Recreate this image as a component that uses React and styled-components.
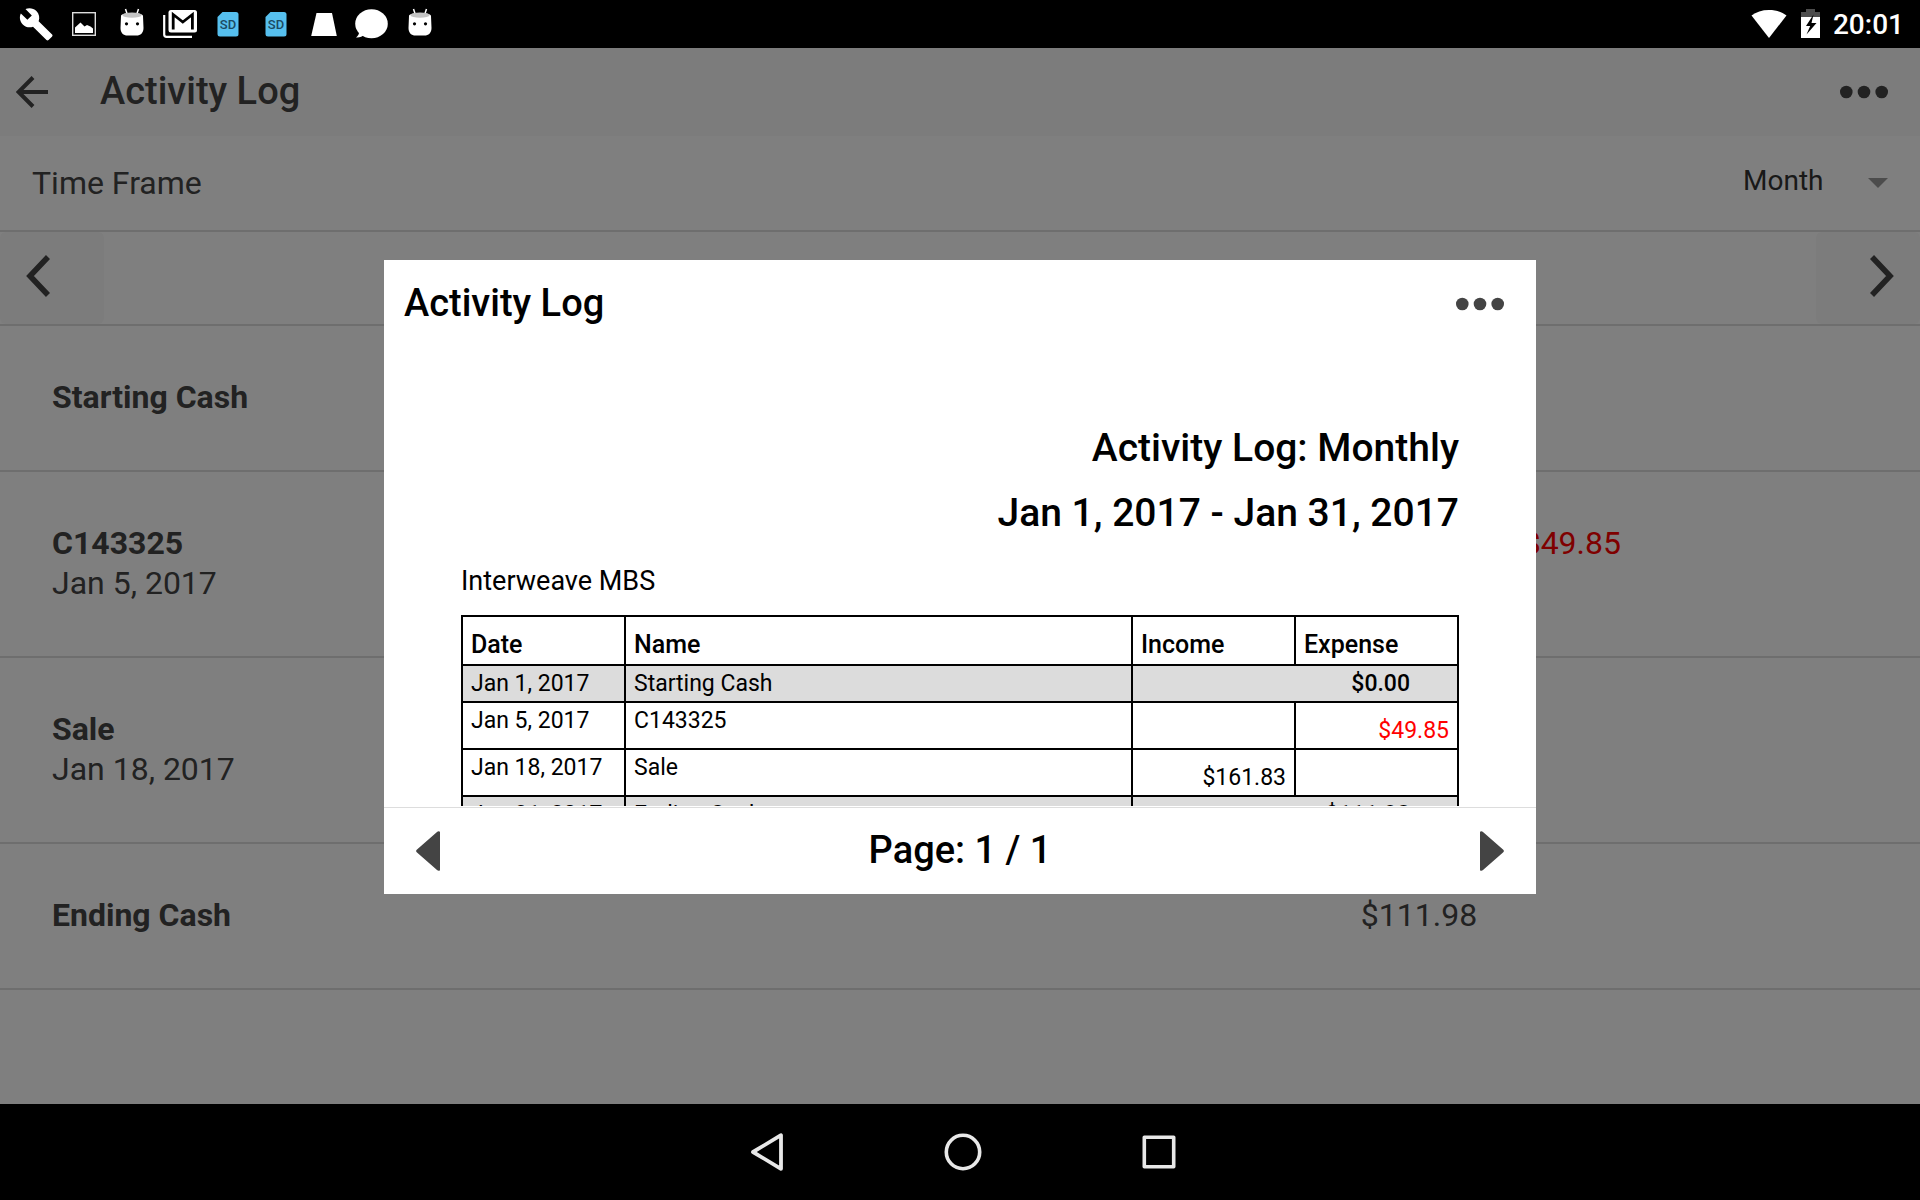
import React, { useState } from 'react';
import styled, { createGlobalStyle } from 'styled-components';

const GlobalStyle = createGlobalStyle`
  *, *::before, *::after { box-sizing: border-box; }
  html, body, #root { height: 100%; }
  body {
    margin: 0;
    background: #000;
    font-family: Roboto, "Liberation Sans", sans-serif;
    overflow: hidden;
  }
  button, select { font: inherit; color: inherit; }
`;

const Device = styled.div`
  min-height: 100%;
  display: grid;
  grid-template-rows: 48px 1fr 96px;
`;

const StatusBar = styled.header`
  display: flex;
  align-items: center;
  justify-content: space-between;
  padding: 0 16px 0 12px;
  background: #000;
  color: #fff;
`;

const StatusGroup = styled.div`
  display: flex;
  align-items: center;
`;

const StatusIcon = styled.svg`
  display: block;
  width: ${(p) => p.$width || 48}px;
  height: 48px;
  font-family: Roboto, sans-serif;
`;

const Clock = styled.time`
  padding-top: 2px;
  font-size: 28px;
  line-height: 36px;
  font-weight: 500;
`;

const Screen = styled.div`
  position: relative;
  background: #fff;
  color: #444;
`;

const Bar = styled.div`
  display: flex;
  align-items: center;
  height: 88px;
  padding: ${(p) => (p.$modal ? '0 32px 0 20px' : '0 32px 0 16px')};
  background: ${(p) => (p.$modal ? '#fff' : '#f8f8f8')};
`;

const Title = styled.h1`
  flex: 1;
  margin: 0;
  padding-bottom: 2px;
  font-size: 38px;
  line-height: 48px;
  font-weight: 500;
  color: ${(p) => p.$color};
`;

const IconButton = styled.button`
  display: flex;
  align-items: center;
  justify-content: center;
  padding: 0;
  border: 0;
  background: none;
  color: #444;
  cursor: pointer;
  svg { display: block; }
`;

const BackButton = styled(IconButton)`
  margin-right: 52px;
`;

const FilterRow = styled.div`
  display: flex;
  align-items: center;
  justify-content: space-between;
  height: 96px;
  padding: 0 32px;
  border-bottom: 2px solid #ddd;
`;

const FilterLabel = styled.label`
  font-size: 32px;
  line-height: 40px;
`;

const SelectBox = styled.div`
  position: relative;
  display: flex;
  align-items: center;
  padding-bottom: 4px;
  &::after {
    content: "";
    position: absolute;
    right: 0;
    top: 15px;
    border: 10px solid transparent;
    border-top-color: #999;
    border-bottom: 0;
    pointer-events: none;
  }
`;

const Select = styled.select`
  appearance: none;
  padding: 0 64px 0 0;
  border: 0;
  background: none;
  color: #333;
  font-size: 28px;
  line-height: 36px;
`;

const PeriodRow = styled.div`
  display: flex;
  justify-content: space-between;
  height: 94px;
  border-bottom: 2px solid #ddd;
`;

const PeriodButton = styled(IconButton)`
  width: 104px;
  border-radius: 6px;
  background: #f8f8f8;
  justify-content: ${(p) => (p.$end ? 'flex-end' : 'flex-start')};
  padding: 0 26px 4px;
`;

const List = styled.ul`
  margin: 0;
  padding: 0;
  list-style: none;
`;

const Entry = styled.li`
  display: grid;
  grid-template-columns: 1165fr 202fr 202fr 299fr;
  padding: 51px 0 51px 52px;
  border-bottom: 2px solid #ddd;
  font-size: 32px;
  line-height: 40px;
`;

const EntryText = styled.div`
  display: flex;
  flex-direction: column;
  padding-bottom: 2px;
`;

const EntryName = styled.strong`
  font-weight: 700;
`;

const Amount = styled.span`
  grid-column: ${(p) => ({ income: '2', expense: '3', total: '2 / span 2' }[p.$kind])};
  text-align: ${(p) => (p.$kind === 'total' ? 'center' : 'right')};
  color: ${(p) => (p.$kind === 'expense' ? '#f00' : 'inherit')};
`;

const Overlay = styled.div`
  position: absolute;
  inset: 0;
  display: flex;
  justify-content: center;
  padding: 212px 0 210px;
  background: rgba(0, 0, 0, 0.5);
`;

const Modal = styled.section`
  display: flex;
  flex-direction: column;
  width: 60%;
  background: #fff;
  color: #000;
`;

const Page = styled.div`
  flex: 1;
  min-height: 0;
  overflow: hidden;
  padding: 68px 77px 0;
  margin-bottom: 1px;
`;

const ReportTitle = styled.h2`
  margin: 0;
  text-align: right;
  font-size: 39px;
  line-height: 65px;
  font-weight: 500;
`;

const Company = styled.p`
  margin: 17px 0 16px;
  font-size: 27px;
  line-height: 36px;
`;

const Report = styled.table`
  width: 100%;
  table-layout: fixed;
  border-collapse: collapse;
  font-size: 23px;
  line-height: 28px;
`;

const Col = styled.col`
  width: ${(p) => p.$width};
`;

const HeadCell = styled.th`
  height: 49px;
  padding: 0 8px 5px;
  border: 2px solid #000;
  text-align: left;
  vertical-align: bottom;
  font-size: 25px;
  font-weight: 500;
`;

const Cell = styled.td`
  height: ${(p) => (p.$summary ? 37 : 47)}px;
  padding: 4px ${(p) => (p.$total ? 47 : 8)}px 3px 8px;
  border: 2px solid #000;
  background: ${(p) => (p.$summary ? '#dcdcdc' : '#fff')};
  color: ${(p) => (p.$negative ? '#f00' : '#000')};
  text-align: ${(p) => (p.$money ? 'right' : 'left')};
  vertical-align: ${(p) => (p.$money ? 'bottom' : 'top')};
  font-weight: ${(p) => (p.$total ? 500 : 400)};
`;

const Pager = styled.footer`
  display: flex;
  align-items: center;
  justify-content: space-between;
  height: 87px;
  padding: 0 32px;
  border-top: 1px solid #ddd;
`;

const PageLabel = styled.span`
  padding-bottom: 2px;
  font-size: 38px;
  line-height: 48px;
  font-weight: 500;
`;

const SystemBar = styled.nav`
  display: flex;
  justify-content: center;
  padding-left: 6px;
  background: #000;
`;

const SystemButton = styled(IconButton)`
  width: 196px;
  color: #e8e8e8;
`;

const AndroidHead = () => (
  <StatusIcon viewBox="0 0 48 48" aria-hidden="true">
    <path d="M17.500 9l2 6M30.500 9l-2 6" stroke="#fff" strokeWidth="1.500" />
    <path d="M13 16c0-2 5-3 11-3s11 1 11 3l.5 12c0 5-3 7.500-7 7.500h-9c-4 0-7-2.500-7-7.500z" fill="#fff" />
    <ellipse cx="24" cy="15.200" rx="9.500" ry="2.600" fill="#c4c4c4" />
    <circle cx="18.500" cy="23.800" r="1.600" fill="#000" />
    <circle cx="29.500" cy="23.800" r="1.600" fill="#000" />
  </StatusIcon>
);

const SdCard = () => (
  <StatusIcon viewBox="0 0 48 48" aria-hidden="true">
    <path d="M18.500 12H32a2.500 2.500 0 0 1 2.500 2.500v19.500a2.500 2.500 0 0 1-2.500 2.500H16a2.500 2.500 0 0 1-2.500-2.500V17z" fill="#56bfee" />
    <text x="24" y="29" textAnchor="middle" fontSize="13" fontWeight="500" fill="#1c4a60">SD</text>
  </StatusIcon>
);

const Dots = () => (
  <svg width="48" height="14" viewBox="0 0 48 14" fill="currentColor" aria-hidden="true">
    <circle cx="6.300" cy="7" r="6.300" />
    <circle cx="24" cy="7" r="6.300" />
    <circle cx="41.700" cy="7" r="6.300" />
  </svg>
);

const Chevron = ({ flip }) => (
  <svg width="24" height="42" viewBox="0 0 24 42" fill="none" stroke="currentColor" strokeWidth="5.600" aria-hidden="true">
    <path d={flip ? 'M2 2l18 19L2 40' : 'M22 2L4 21l18 19'} />
  </svg>
);

const PageArrow = ({ flip }) => (
  <svg width="24" height="40" viewBox="0 0 24 40" fill="currentColor" aria-hidden="true">
    <path d={flip
      ? 'M0 0.800Q1.500-.5 3 1L23 18.500Q24.800 20 23 21.500L3 39Q1.500 40.500 0 39.200z'
      : 'M24 0.800Q22.500-.5 21 1L1 18.500Q-.8 20 1 21.500L21 39Q22.500 40.500 24 39.200z'} />
  </svg>
);

const entries = [
  { name: 'Starting Cash', amount: '$0.00', kind: 'total', logDate: 'Jan 1, 2017' },
  { name: 'C143325', date: 'Jan 5, 2017', amount: '$49.85', kind: 'expense', logDate: 'Jan 5, 2017' },
  { name: 'Sale', date: 'Jan 18, 2017', amount: '$161.83', kind: 'income', logDate: 'Jan 18, 2017' },
  { name: 'Ending Cash', amount: '$111.98', kind: 'total', logDate: 'Jan 31, 2017' },
];

function ReportRow({ entry }) {
  const summary = entry.kind === 'total';
  return (
    <tr>
      <Cell $summary={summary}>{entry.logDate}</Cell>
      <Cell $summary={summary}>{entry.name}</Cell>
      {summary ? (
        <Cell $summary $money $total colSpan={2}>{entry.amount}</Cell>
      ) : (
        <>
          <Cell $money>{entry.kind === 'income' ? entry.amount : ''}</Cell>
          <Cell $money $negative>{entry.kind === 'expense' ? entry.amount : ''}</Cell>
        </>
      )}
    </tr>
  );
}

export default function App() {
  const [frame, setFrame] = useState('Month');
  return (
    <>
      <GlobalStyle />
      <Device>
        <StatusBar>
          <StatusGroup>
            <StatusIcon viewBox="0 0 48 48" aria-hidden="true">
              <path transform="translate(6.500 6.500) scale(1.480)" fill="#fff" d="M22.700 19l-9.100-9.100c.9-2.300.4-5-1.500-6.900-2-2-5-2.400-7.400-1.300L9 6 6 9 1.600 4.700C.4 7.100.9 10.100 2.900 12.100c1.900 1.900 4.600 2.400 6.900 1.500l9.100 9.100c.4.4 1 .4 1.400 0l2.300-2.300c.5-.4.5-1.100.1-1.400z" />
            </StatusIcon>
            <StatusIcon viewBox="0 0 48 48" aria-hidden="true">
              <rect x="12.700" y="12.700" width="22.600" height="22.600" fill="none" stroke="#ddd" strokeWidth="1.400" />
              <path d="M15 33v-5.500l5.500-5 4 4 2.500-1.500 3.500 1.500 2.500 2V33z" fill="#fff" />
            </StatusIcon>
            <AndroidHead />
            <StatusIcon viewBox="0 0 48 48" aria-hidden="true">
              <rect x="12.500" y="10" width="28.500" height="22.500" rx="2.500" fill="#fff" />
              <path d="M17.200 29.500V14.500l9.600 7.500 9.600-7.500V29.500" fill="none" stroke="#000" strokeWidth="2.800" />
              <path d="M8.200 15v19.500a2.300 2.300 0 0 0 2.300 2.300H36" fill="none" stroke="#fff" strokeWidth="2.200" />
            </StatusIcon>
            <SdCard />
            <SdCard />
            <StatusIcon viewBox="0 0 48 48" aria-hidden="true">
              <path d="M16.500 13h15.500L36.800 36H11.200z" fill="#fff" />
            </StatusIcon>
            <StatusIcon viewBox="0 0 48 48" aria-hidden="true">
              <ellipse cx="23.500" cy="23.700" rx="16.300" ry="14.500" fill="#fff" />
              <path d="M11 31c.5 3-1 5-3 6.500 3 .5 6.500-1 8.500-3z" fill="#fff" />
            </StatusIcon>
            <AndroidHead />
          </StatusGroup>
          <StatusGroup>
            <StatusIcon viewBox="0 0 48 48" aria-hidden="true">
              <path d="M24 38L6.500 15.500C11 12 17 10 24 10s13 2 17.500 5.500z" fill="#fff" />
            </StatusIcon>
            <StatusIcon $width={40} viewBox="0 0 40 48" aria-hidden="true">
              <path d="M13 9h9v3h5v5H8v-5h5z" fill="#4d4d4d" />
              <path d="M8 17h19v21H8z" fill="#fff" />
              <path d="M20.500 14.500L13 26h4.200l-3.700 8.500L23.500 23h-5z" fill="#000" />
            </StatusIcon>
            <Clock>20:01</Clock>
          </StatusGroup>
        </StatusBar>

        <Screen>
          <Bar>
            <BackButton aria-label="Back">
              <svg width="32" height="32" viewBox="0 0 32 32" fill="none" stroke="currentColor" strokeWidth="4" aria-hidden="true">
                <path d="M32 16H4M17 1.500L2.500 16 17 30.500" />
              </svg>
            </BackButton>
            <Title $color="#444">Activity Log</Title>
            <IconButton aria-label="More"><Dots /></IconButton>
          </Bar>
          <FilterRow>
            <FilterLabel htmlFor="frame">Time Frame</FilterLabel>
            <SelectBox>
              <Select id="frame" value={frame} onChange={(e) => setFrame(e.target.value)}>
                <option>Month</option>
              </Select>
            </SelectBox>
          </FilterRow>
          <PeriodRow>
            <PeriodButton aria-label="Previous period"><Chevron /></PeriodButton>
            <PeriodButton $end aria-label="Next period"><Chevron flip /></PeriodButton>
          </PeriodRow>
          <List>
            {entries.map((e) => (
              <Entry key={e.name}>
                <EntryText>
                  <EntryName>{e.name}</EntryName>
                  {e.date && <span>{e.date}</span>}
                </EntryText>
                <Amount $kind={e.kind}>{e.amount}</Amount>
              </Entry>
            ))}
          </List>

          <Overlay>
            <Modal role="dialog" aria-label="Activity Log">
              <Bar $modal>
                <Title as="h2" $color="#000">Activity Log</Title>
                <IconButton aria-label="More"><Dots /></IconButton>
              </Bar>
              <Page>
                <ReportTitle>Activity Log: Monthly</ReportTitle>
                <ReportTitle>Jan 1, 2017 - Jan 31, 2017</ReportTitle>
                <Company>Interweave MBS</Company>
                <Report>
                  <colgroup>
                    <Col $width="163px" />
                    <Col />
                    <Col $width="163px" />
                    <Col $width="163px" />
                  </colgroup>
                  <thead>
                    <tr>
                      <HeadCell>Date</HeadCell>
                      <HeadCell>Name</HeadCell>
                      <HeadCell>Income</HeadCell>
                      <HeadCell>Expense</HeadCell>
                    </tr>
                  </thead>
                  <tbody>
                    {entries.map((e) => <ReportRow key={e.name} entry={e} />)}
                  </tbody>
                </Report>
              </Page>
              <Pager>
                <IconButton aria-label="Previous page"><PageArrow /></IconButton>
                <PageLabel>Page: 1 / 1</PageLabel>
                <IconButton aria-label="Next page"><PageArrow flip /></IconButton>
              </Pager>
            </Modal>
          </Overlay>
        </Screen>

        <SystemBar>
          <SystemButton aria-label="Back">
            <svg width="38" height="40" viewBox="0 0 38 40" fill="none" stroke="currentColor" strokeWidth="3.800" strokeLinejoin="round" aria-hidden="true">
              <path d="M33 3.200v33.600L5 20z" />
            </svg>
          </SystemButton>
          <SystemButton aria-label="Home">
            <svg width="40" height="40" viewBox="0 0 40 40" fill="none" stroke="currentColor" strokeWidth="3.600" aria-hidden="true">
              <circle cx="20" cy="20" r="16.700" />
            </svg>
          </SystemButton>
          <SystemButton aria-label="Recent apps">
            <svg width="40" height="40" viewBox="0 0 40 40" fill="none" stroke="currentColor" strokeWidth="3.600" strokeLinejoin="round" aria-hidden="true">
              <rect x="5.300" y="5.300" width="29.400" height="29.400" />
            </svg>
          </SystemButton>
        </SystemBar>
      </Device>
    </>
  );
}
